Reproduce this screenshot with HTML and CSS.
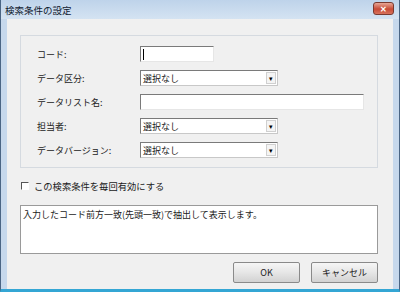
FILE: index.html
```html
<!DOCTYPE html>
<html lang="ja">
<head>
    <meta charset="UTF-8">
    <title>検索条件の設定</title>
    <link rel="stylesheet" href="styles.css">
</head>
<body>
    <div class="window">
        <div class="titlebar">
            <span class="title">検索条件の設定</span>
            <span class="close-btn">&#x2715;</span>
        </div>
        <div class="client">
            <div class="group-box">
                <div class="form-row">
                    <label>コード:</label>
                    <div class="text-input short"><span class="caret"></span></div>
                </div>
                <div class="form-row">
                    <label>データ区分:</label>
                    <div class="select-box"><span>選択なし</span><span class="drop">&#9662;</span></div>
                </div>
                <div class="form-row">
                    <label>データリスト名:</label>
                    <div class="text-input long"></div>
                </div>
                <div class="form-row">
                    <label>担当者:</label>
                    <div class="select-box"><span>選択なし</span><span class="drop">&#9662;</span></div>
                </div>
                <div class="form-row">
                    <label>データバージョン:</label>
                    <div class="select-box"><span>選択なし</span><span class="drop">&#9662;</span></div>
                </div>
            </div>

            <div class="check-row">
                <span class="check-box"></span>
                <span>この検索条件を毎回有効にする</span>
            </div>

            <div class="desc-box">入力したコード前方一致(先頭一致)で抽出して表示します。</div>

            <div class="button-row">
                <button class="btn">OK</button>
                <button class="btn">キャンセル</button>
            </div>
        </div>
    </div>
</body>
</html>
```

FILE: styles.css
```css
body {
    margin: 0;
    padding: 0;
    font-family: "Noto Sans CJK JP", "Noto Sans", sans-serif;
    font-size: 9px;
    color: #1a1a1a;
}

.window {
    width: 400px;
    height: 292px;
    box-sizing: border-box;
    display: flex;
    flex-direction: column;
    background-color: #c6d8ec;
    border-left: 1px solid #4a6584;
    border-right: 1px solid #4a6584;
    border-bottom: 3px solid #34a6d4;
}

.titlebar {
    height: 19px;
    display: flex;
    align-items: center;
    justify-content: space-between;
    padding: 0 5px 0 4px;
    background: linear-gradient(#bed3ea, #d4e3f2);
}

.title {
    font-size: 9.5px;
    color: #102030;
}

.close-btn {
    width: 21px;
    height: 13px;
    margin-top: -3px;
    box-sizing: border-box;
    display: flex;
    align-items: center;
    justify-content: center;
    color: #fff;
    font-size: 8px;
    font-weight: bold;
    border: 1px solid #7a3a30;
    border-radius: 3px;
    background: linear-gradient(#e8a796, #c74a36 55%, #d8725c);
}

.client {
    flex: 1;
    margin: 0 6px 0 6px;
    padding: 16px 15px 0 13px;
    background-color: #f0f0f0;
}

.group-box {
    height: 133px;
    box-sizing: border-box;
    border: 1px solid #d5dae0;
    padding: 10px 0 0 16px;
    display: flex;
    flex-direction: column;
    gap: 8px;
}

.form-row {
    display: flex;
    align-items: center;
    height: 16px;
}

.form-row label {
    width: 103px;
    color: #222;
}

.text-input {
    height: 16px;
    box-sizing: border-box;
    background-color: #fff;
    border: 1px solid;
    border-color: #7a7a7a #e6e6e6 #e6e6e6 #7a7a7a;
    display: flex;
    align-items: center;
    padding-left: 2px;
}

.text-input.short {
    width: 74px;
}

.text-input.long {
    width: 224px;
}

.caret {
    width: 1px;
    height: 11px;
    background-color: #000;
}

.select-box {
    width: 138px;
    height: 16px;
    box-sizing: border-box;
    background-color: #fff;
    border: 1px solid;
    border-color: #7a7a7a #c8c8c8 #c8c8c8 #7a7a7a;
    display: flex;
    align-items: center;
    justify-content: space-between;
    padding-left: 2px;
}

.drop {
    width: 10px;
    height: 12px;
    margin-right: 1px;
    box-sizing: border-box;
    border: 1px solid #d0d0d0;
    background-color: #f4f4f4;
    font-size: 7px;
    line-height: 10px;
    text-align: center;
    color: #000;
}

.check-row {
    display: flex;
    align-items: center;
    gap: 5px;
    margin-top: 12px;
    padding-left: 1px;
    height: 11px;
    font-size: 9.3px;
}

.check-box {
    width: 8px;
    height: 8px;
    box-sizing: border-box;
    background-color: #fff;
    border: 1px solid;
    border-color: #555 #fff #fff #555;
}

.desc-box {
    height: 49px;
    margin-top: 14px;
    box-sizing: border-box;
    background-color: #fff;
    border: 1px solid #9a9a9a;
    padding: 3px 2px;
    line-height: 12px;
}

.button-row {
    display: flex;
    justify-content: flex-end;
    gap: 11px;
    margin-top: 8px;
    padding-right: 0;
}

.btn {
    width: 67px;
    height: 21px;
    font-family: "Noto Sans CJK JP", "Noto Sans", sans-serif;
    font-size: 9px;
    color: #222;
    border: 1px solid #8a8a8a;
    border-radius: 2px;
    background: linear-gradient(#f6f6f6, #e6e6e6 50%, #d2d2d2);
    padding: 0;
}
```
